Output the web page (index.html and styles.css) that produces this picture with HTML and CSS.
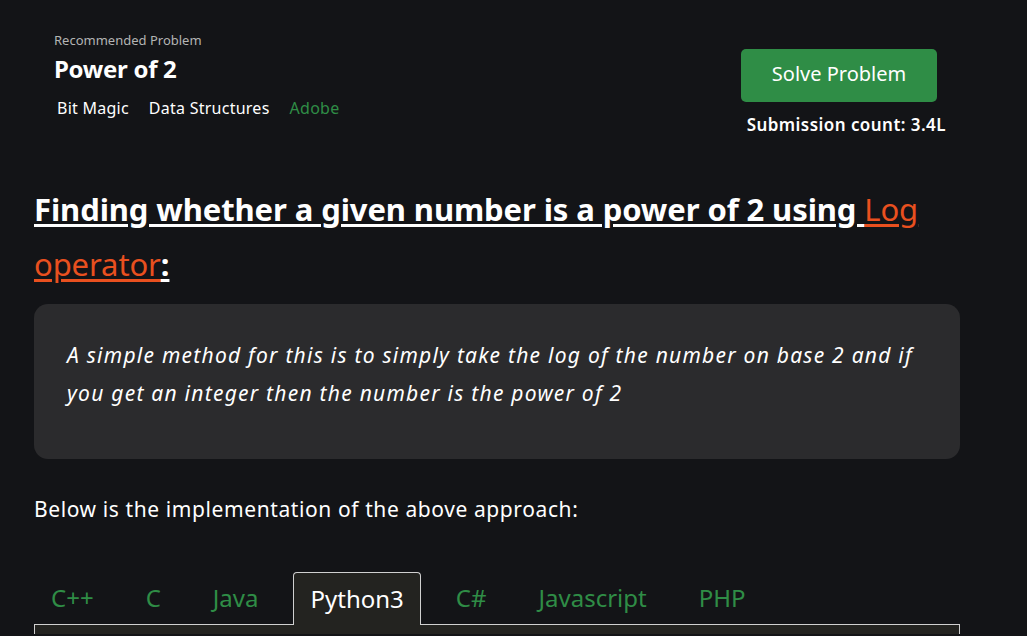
FILE: index.html
```html
<!DOCTYPE html>
<html>
<head>
<meta charset="utf-8">
<link rel="stylesheet" href="styles.css">
</head>
<body>
<div class="page">
  <header class="problem">
    <div class="problem-info">
      <div class="rec">Recommended Problem</div>
      <div class="title">Power of 2</div>
      <div class="tags">
        <span class="tag">Bit Magic</span>
        <span class="tag">Data Structures</span>
        <span class="tag company">Adobe</span>
      </div>
    </div>
    <div class="problem-actions">
      <button class="solve">Solve Problem</button>
      <div class="count">Submission count: 3.4L</div>
    </div>
  </header>

  <h2 class="heading"><u>Finding whether a given number is a power of 2 using <a class="link">Log operator</a>:</u></h2>

  <div class="note">
    <p>A simple method for this is to simply take the log of the number on base 2 and if you get an integer then the number is the power of 2</p>
  </div>

  <p class="para">Below is the implementation of the above approach:</p>

  <div class="tabs">
    <span class="tab">C++</span>
    <span class="tab">C</span>
    <span class="tab">Java</span>
    <span class="tab active">Python3</span>
    <span class="tab">C#</span>
    <span class="tab">Javascript</span>
    <span class="tab">PHP</span>
  </div>
  <div class="code"></div>
</div>
</body>
</html>
```

FILE: styles.css
```css
html, body {
  margin: 0;
  padding: 0;
  background: #131417;
  color: #fff;
  font-family: "Noto Sans", "Open Sans", sans-serif;
  overflow: hidden;
}
.page {
  width: 926px;
  padding: 0 0 0 34px;
}
.problem {
  display: flex;
  justify-content: space-between;
  padding: 32px 14px 0 20px;
}
.rec {
  font-size: 13px;
  color: #b4b4b4;
  line-height: 16px;
}
.title {
  font-size: 24px;
  font-weight: 700;
  line-height: 28px;
  margin-top: 7px;
  letter-spacing: -0.3px;
}
.tags {
  display: flex;
  gap: 20px;
  margin-top: 15px;
  padding-left: 3px;
  font-size: 16px;
  line-height: 20px;
  letter-spacing: 0.25px;
}
.tag.company { color: #2f8d46; }
.problem-actions {
  display: flex;
  flex-direction: column;
  align-items: flex-end;
  padding-top: 17px;
}
.solve {
  width: 196px;
  height: 53px;
  margin-right: 9px;
  padding: 0 0 4px 0;
  background: #2f8d46;
  color: #fff;
  border: none;
  border-radius: 5px;
  font-family: inherit;
  font-size: 20px;
}
.count {
  margin-top: 12px;
  font-size: 17px;
  font-weight: 600;
  line-height: 22px;
  letter-spacing: 0.45px;
}
.heading {
  margin: 46px 0 0 0;
  font-size: 31px;
  font-weight: 700;
  line-height: 55px;
  letter-spacing: -0.1px;
}
.heading u { text-decoration-thickness: 3px; text-underline-offset: 3px; }
.link {
  color: #e9501f;
  font-weight: 400;
  text-decoration: underline;
}
.note {
  margin-top: 12px;
  background: #2b2b2d;
  border-radius: 14px;
  padding: 32px 33px 47px 33px;
}
.note p {
  margin: 0;
  font-style: italic;
  font-size: 21px;
  letter-spacing: 1.25px;
  line-height: 38px;
}
.para {
  margin: 36px 0 0 0;
  font-size: 21px;
  letter-spacing: 0.6px;
  line-height: 28px;
}
.tabs {
  display: flex;
  margin-top: 47px;
  height: 54px;
  align-items: flex-end;
}
.tab {
  color: #2f8d46;
  font-size: 24px;
  line-height: 52px;
  padding: 0 16px;
  margin-right: 18px;
  border: 1px solid transparent;
  border-bottom: none;
  border-radius: 4px 4px 0 0;
}
.tab.active {
  color: #fff;
  background: #232320;
  border-color: #d0d0d0;
  position: relative;
  top: 1px;
  z-index: 1;
}
.code {
  height: 9px;
  background: #232320;
  border: 1px solid #d0d0d0;
  border-bottom: none;
}
```
